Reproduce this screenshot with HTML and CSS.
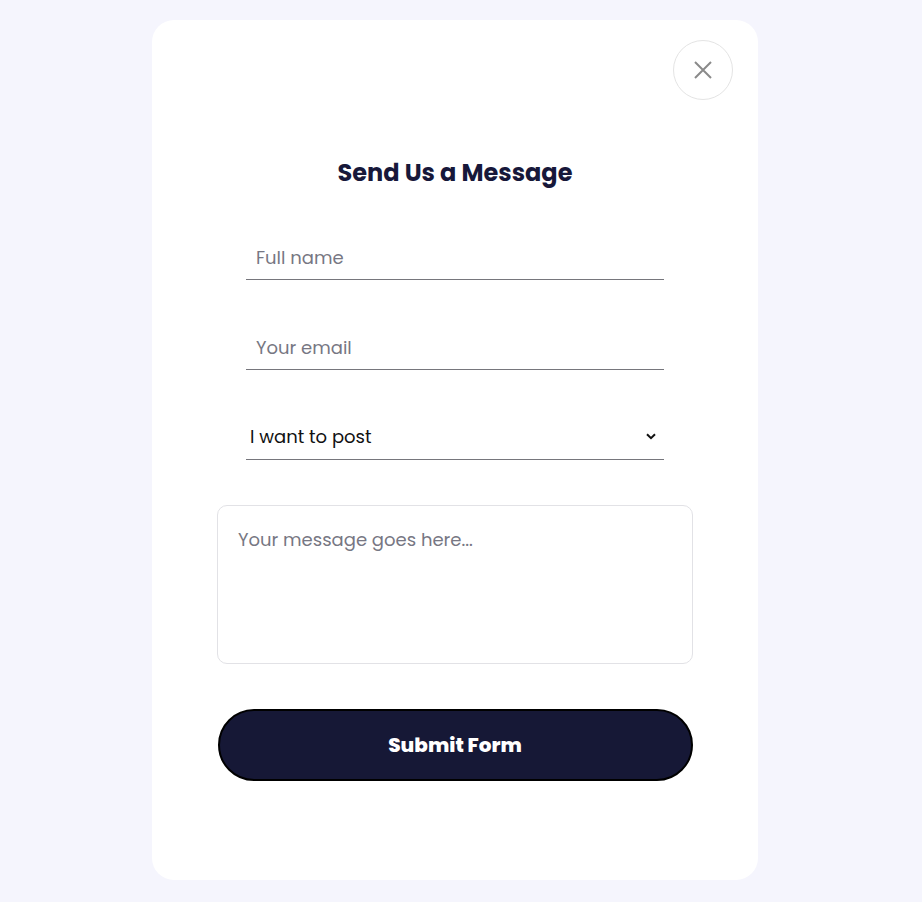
FILE: index.html
```html
<!DOCTYPE html>
<html lang="en">
<head>
<meta charset="utf-8">
<title>Send Us a Message</title>
<link rel="stylesheet" href="styles.css">
</head>
<body>
<div class="card">
  <div class="card-top">
    <button class="close" type="button" aria-label="Close">
      <svg width="20" height="20" viewBox="0 0 20 20"><path d="M2 2 L18 18 M18 2 L2 18" stroke="#8a8a8a" stroke-width="2" fill="none"/></svg>
    </button>
  </div>
  <h2 class="title">Send Us a Message</h2>
  <form class="form">
    <div class="field"><input class="line-input" type="text" placeholder="Full name"></div>
    <div class="field"><input class="line-input" type="email" placeholder="Your email"></div>
    <div class="field select-field">
      <span class="select-text">I want to post</span>
      <svg class="chevron" width="10" height="7" viewBox="0 0 10 7"><path d="M1 1.2 L5 5.2 L9 1.2" stroke="#111" stroke-width="2" fill="none"/></svg>
    </div>
    <textarea class="message" placeholder="Your message goes here..."></textarea>
    <button class="submit" type="button">Submit Form</button>
  </form>
</div>
</body>
</html>
```

FILE: styles.css
```css
* { box-sizing: border-box; }
html, body { margin: 0; padding: 0; }
body {
  background: #f5f5fd;
  font-family: Poppins, "Inter", "Open Sans", sans-serif;
  padding: 20px 0 22px 152px;
}
.card {
  width: 606px;
  height: 860px;
  background: #ffffff;
  border-radius: 22px;
  padding: 20px 25px 0 0;
}
.card-top {
  display: flex;
  justify-content: flex-end;
}
.close {
  width: 60px;
  height: 60px;
  border-radius: 50%;
  border: 1px solid #e4e4e4;
  background: #fff;
  display: flex;
  align-items: center;
  justify-content: center;
  padding: 0;
}
.title {
  margin: 58px 0 0 25px;
  text-align: center;
  font-size: 24px;
  line-height: 30px;
  font-weight: 700;
  color: #17183a;
}
.form {
  display: flex;
  flex-direction: column;
  align-items: center;
  margin: 47px 0 0 25px;
}
.field {
  width: 418px;
  height: 45px;
  border-bottom: 1px solid #76767c;
  margin-bottom: 45px;
}
.line-input {
  width: 100%;
  height: 100%;
  border: none;
  outline: none;
  padding: 1px 10px 0;
  font-family: inherit;
  font-size: 18px;
  color: #222;
  background: transparent;
}
.line-input::placeholder, .message::placeholder { color: #777783; }
.select-field {
  display: flex;
  align-items: center;
  justify-content: space-between;
  padding: 0 8px 1px 4px;
}
.select-text {
  font-size: 18px;
  color: #111;
}
.message {
  width: 476px;
  height: 159px;
  border: 1px solid #e2e2e6;
  border-radius: 10px;
  padding: 20px 20px;
  font-family: inherit;
  font-size: 18px;
  resize: none;
  outline: none;
}
.submit {
  width: 475px;
  height: 72px;
  margin-top: 45px;
  border: 2px solid #000;
  border-radius: 36px;
  background: #161836;
  color: #fff;
  font-family: inherit;
  font-size: 20px;
  font-weight: 800;
}
```
